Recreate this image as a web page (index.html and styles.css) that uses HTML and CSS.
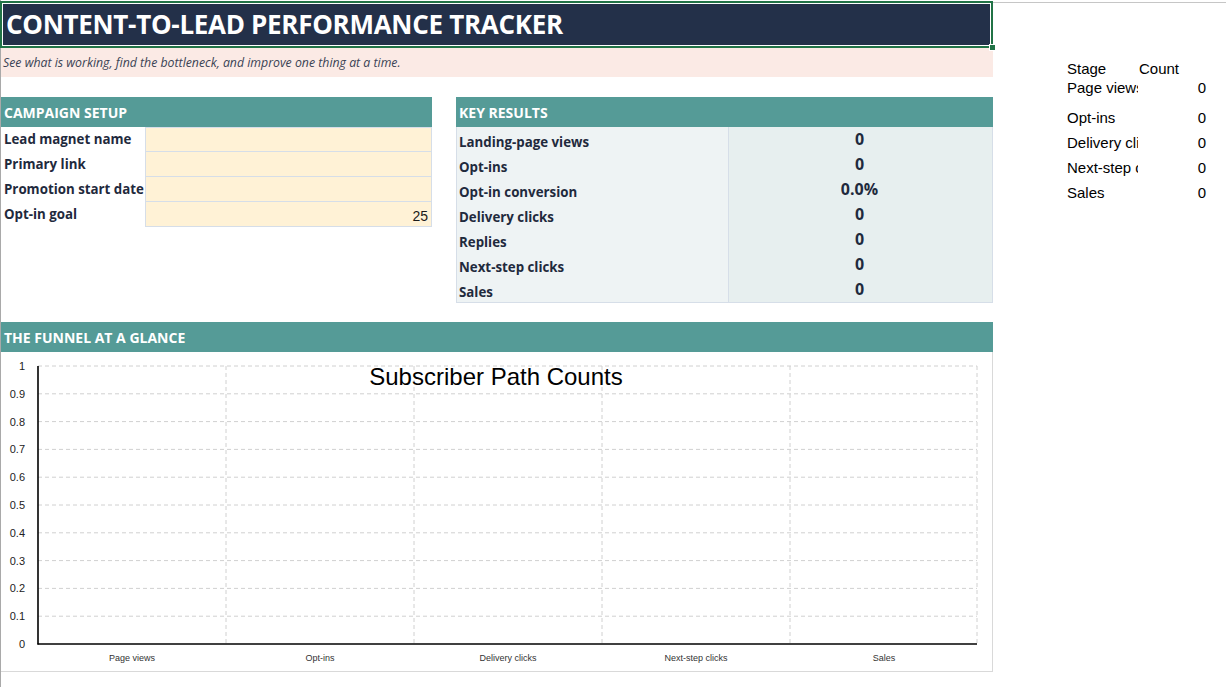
FILE: index.html
```html
<!DOCTYPE html>
<html lang="en">
<head>
<meta charset="utf-8">
<title>Content-to-Lead Performance Tracker</title>
<link rel="stylesheet" href="styles.css">
</head>
<body>
<div class="page">
  <main class="main">
    <div class="title"><div class="title-fill">CONTENT-TO-LEAD PERFORMANCE TRACKER</div></div>
    <div class="subtitle">See what is working, find the bottleneck, and improve one thing at a time.</div>

    <div class="panels">
      <section class="panel setup">
        <div class="sec-head">CAMPAIGN SETUP</div>
        <div class="setup-grid">
          <div class="s-label">Lead magnet name</div><div class="s-input first"></div>
          <div class="s-label">Primary link</div><div class="s-input"></div>
          <div class="s-label">Promotion start date</div><div class="s-input"></div>
          <div class="s-label">Opt-in goal</div><div class="s-input num">25</div>
        </div>
      </section>

      <section class="panel results">
        <div class="sec-head">KEY RESULTS</div>
        <div class="results-grid">
          <div class="r-label">Landing-page views</div><div class="r-val">0</div>
          <div class="r-label">Opt-ins</div><div class="r-val">0</div>
          <div class="r-label">Opt-in conversion</div><div class="r-val">0.0%</div>
          <div class="r-label">Delivery clicks</div><div class="r-val">0</div>
          <div class="r-label">Replies</div><div class="r-val">0</div>
          <div class="r-label">Next-step clicks</div><div class="r-val">0</div>
          <div class="r-label">Sales</div><div class="r-val">0</div>
        </div>
      </section>
    </div>

    <section class="funnel">
      <div class="sec-head">THE FUNNEL AT A GLANCE</div>
      <div class="chart">
        <svg class="chart-svg" width="991" height="319" viewBox="0 0 991 319">
          <g class="grid">
            <line x1="37" y1="14" x2="976" y2="14"/>
            <line x1="37" y1="41.8" x2="976" y2="41.8"/>
            <line x1="37" y1="69.6" x2="976" y2="69.6"/>
            <line x1="37" y1="97.4" x2="976" y2="97.4"/>
            <line x1="37" y1="125.2" x2="976" y2="125.2"/>
            <line x1="37" y1="153" x2="976" y2="153"/>
            <line x1="37" y1="180.8" x2="976" y2="180.8"/>
            <line x1="37" y1="208.6" x2="976" y2="208.6"/>
            <line x1="37" y1="236.4" x2="976" y2="236.4"/>
            <line x1="37" y1="264.2" x2="976" y2="264.2"/>
            <line x1="225" y1="14" x2="225" y2="292"/>
            <line x1="413" y1="14" x2="413" y2="292"/>
            <line x1="601" y1="14" x2="601" y2="292"/>
            <line x1="789" y1="14" x2="789" y2="292"/>
            <line x1="976" y1="14" x2="976" y2="292"/>
          </g>
          <g class="axis">
            <line x1="37" y1="14" x2="37" y2="292.5"/>
            <line x1="36.5" y1="292" x2="976" y2="292"/>
          </g>
          <g class="ylab">
            <text x="24" y="18">1</text>
            <text x="24" y="45.8">0.9</text>
            <text x="24" y="73.6">0.8</text>
            <text x="24" y="101.4">0.7</text>
            <text x="24" y="129.2">0.6</text>
            <text x="24" y="157">0.5</text>
            <text x="24" y="184.8">0.4</text>
            <text x="24" y="212.6">0.3</text>
            <text x="24" y="240.4">0.2</text>
            <text x="24" y="268.2">0.1</text>
            <text x="24" y="296">0</text>
          </g>
          <text class="ctitle" x="495" y="33">Subscriber Path Counts</text>
          <g class="xlab">
            <text x="131" y="309">Page views</text>
            <text x="319" y="309">Opt-ins</text>
            <text x="507" y="309">Delivery clicks</text>
            <text x="695" y="309">Next-step clicks</text>
            <text x="883" y="309">Sales</text>
          </g>
        </svg>
      </div>
    </section>
  </main>

  <aside class="side">
    <div class="side-grid">
      <div class="c h1">Stage</div><div class="c h1 cnt-h">Count</div>
      <div class="c h2">Page views</div><div class="c h2 v">0</div>
      <div class="c h3">Opt-ins</div><div class="c h3 v">0</div>
      <div class="c">Delivery clicks</div><div class="c v">0</div>
      <div class="c">Next-step clicks</div><div class="c v">0</div>
      <div class="c">Sales</div><div class="c v">0</div>
    </div>
  </aside>
</div>
</body>
</html>
```
FILE: styles.css
```css
html, body {
  margin: 0;
  padding: 0;
  background: #ffffff;
}
body {
  width: 1226px;
  height: 687px;
  overflow: hidden;
  font-family: "Open Sans", "Noto Sans", sans-serif;
}
.page {
  display: flex;
  height: 687px;
  border-left: 1px solid #a9a9a9;
  box-sizing: border-box;
  background:
    linear-gradient(#c6c6c6, #c6c6c6) 0 2px / 100% 1px no-repeat;
}
.main {
  width: 992px;
  display: flex;
  flex-direction: column;
}

/* Title */
.title {
  position: relative;
  margin-top: 1px;
  margin-left: -1px;
  height: 47px;
  box-sizing: border-box;
  border: 2px solid #217346;
  padding: 1px;
  background: #ffffff;
}
.title::after {
  content: "";
  position: absolute;
  right: -5px;
  bottom: -5px;
  width: 5px;
  height: 5px;
  background: #217346;
  border: 1px solid #ffffff;
}
.title-fill {
  height: 100%;
  background: #233049;
  color: #ffffff;
  font-weight: 700;
  font-size: 26px;
  letter-spacing: -0.3px;
  display: flex;
  align-items: center;
  padding-left: 3px;
  padding-bottom: 1px;
  box-sizing: border-box;
}

/* Subtitle */
.subtitle {
  height: 29px;
  background: #fbeae5;
  color: #3a4354;
  font-style: italic;
  font-size: 12.3px;
  line-height: 29px;
  padding-left: 2px;
}

/* Panels */
.panels {
  display: flex;
  gap: 24px;
  margin-top: 20px;
  align-items: flex-start;
}
.setup { width: 431px; }
.results { width: 537px; }

.sec-head {
  height: 30px;
  background: #559b97;
  color: #ffffff;
  font-weight: 700;
  font-size: 14px;
  display: flex;
  align-items: center;
  padding-left: 3px;
  box-sizing: border-box;
}

.setup-grid {
  display: grid;
  grid-template-columns: 144px 287px;
  grid-auto-rows: 25px;
}
.s-label {
  color: #1f2a3d;
  font-weight: 700;
  font-size: 13.3px;
  white-space: nowrap;
  padding-left: 3px;
  line-height: 25px;
  padding-bottom: 2px;
  box-sizing: border-box;
}
.s-input {
  background: #fff2d6;
  border: 1px solid #d6dee8;
  border-top: none;
  box-sizing: border-box;
}
.s-input.first { border-top: 1px solid #d6dee8; }
.s-input.num {
  font-family: "Liberation Sans", Arial, sans-serif;
  font-size: 14px;
  color: #1a1a1a;
  text-align: right;
  padding-right: 3px;
  display: flex;
  align-items: flex-end;
  justify-content: flex-end;
  padding-bottom: 2px;
}

.results-grid {
  display: grid;
  grid-template-columns: 271px 1fr;
  grid-auto-rows: 25px;
  border: 1px solid #d6dee8;
  border-top: none;
}
.r-label {
  background: #eef3f4;
  color: #1f2a3d;
  font-weight: 700;
  font-size: 13.3px;
  padding-left: 2px;
  display: flex;
  align-items: flex-end;
  padding-bottom: 1px;
  box-sizing: border-box;
}
.r-val {
  background: #e7efef;
  border-left: 1px solid #d6dee8;
  color: #1f2a3d;
  font-weight: 700;
  font-size: 16px;
  line-height: 25px;
  padding-bottom: 1px;
  box-sizing: border-box;
  display: flex;
  align-items: center;
  justify-content: center;
  padding-right: 2px;
}

/* Funnel */
.funnel {
  margin-top: 19px;
}
.chart {
  height: 320px;
  border-right: 1px solid #d9d9d9;
  border-bottom: 1px solid #d9d9d9;
  box-sizing: border-box;
}
.chart-svg { display: block; }
.grid line {
  stroke: #d0d0d0;
  stroke-width: 1;
  stroke-dasharray: 4 3;
}
.axis line {
  stroke: #000000;
  stroke-width: 1.6;
}
.ylab text {
  font-family: "Liberation Sans", Arial, sans-serif;
  font-size: 11px;
  fill: #222222;
  text-anchor: end;
}
.ctitle {
  font-family: "Liberation Sans", Arial, sans-serif;
  font-size: 24px;
  fill: #000000;
  text-anchor: middle;
}
.xlab text {
  font-family: "Liberation Sans", Arial, sans-serif;
  font-size: 9px;
  fill: #333333;
  text-anchor: middle;
}

/* Side data table */
.side {
  margin-left: 71px;
  padding-top: 48px;
}
.side-grid {
  display: grid;
  grid-template-columns: 74px 71px;
  grid-template-rows: 29px 20px 30px 25px 25px 25px;
}
.c {
  font-family: "Liberation Sans", Arial, sans-serif;
  font-size: 15px;
  color: #000000;
  white-space: nowrap;
  overflow: hidden;
  display: flex;
  align-items: flex-end;
  padding-left: 3px;
  padding-bottom: 1px;
  box-sizing: border-box;
  line-height: 17px;
}
.cnt-h { padding-left: 1px; }
.v {
  justify-content: flex-end;
  padding-right: 3px;
}
.h1 { padding-bottom: 0; }
```
